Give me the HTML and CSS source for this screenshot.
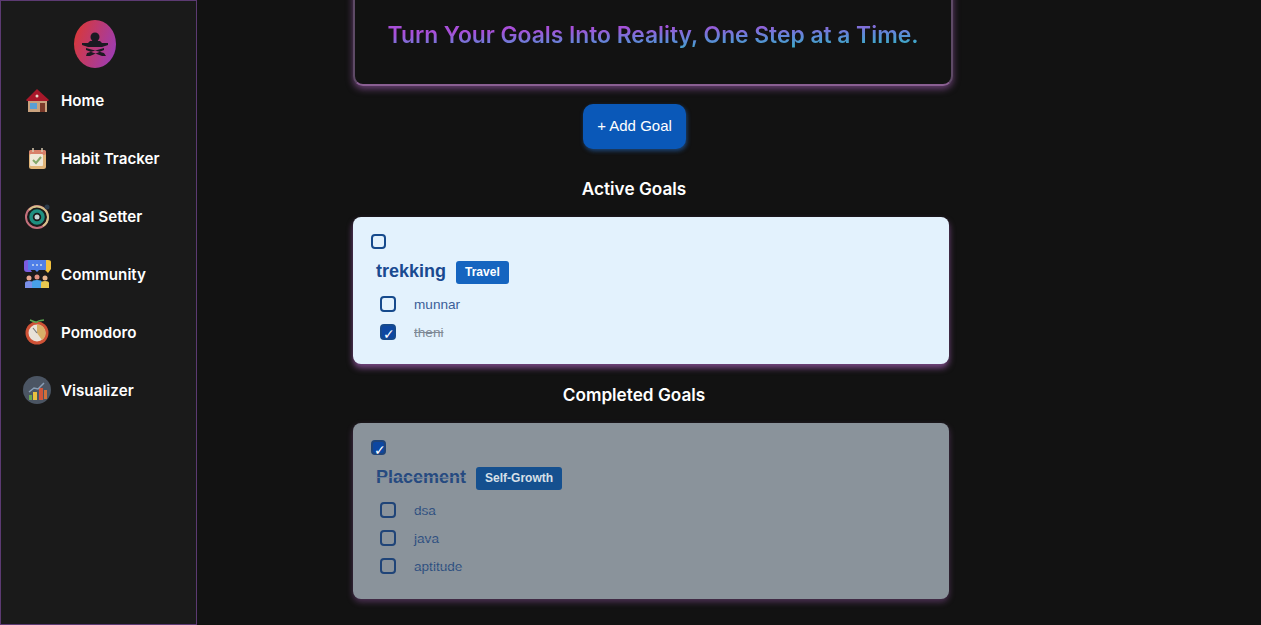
FILE: index.html
```html
<!DOCTYPE html>
<html lang="en">
<head>
<meta charset="utf-8">
<title>Goal Setter</title>
<link rel="stylesheet" href="styles.css">
</head>
<body>
<div class="app">
  <aside class="sidebar">
    <div class="logo">
      <svg viewBox="0 0 42 48" width="42" height="48">
        <defs><linearGradient id="lg" x1="0" y1="0.3" x2="1" y2="0.7"><stop offset="0" stop-color="#d8383a"/><stop offset="1" stop-color="#9c3cb4"/></linearGradient></defs>
        <ellipse cx="21" cy="24" rx="21" ry="24" fill="url(#lg)"/>
        <circle cx="21" cy="17" r="4.500" fill="#1c1a22"/>
        <path d="M16 21h10l2 2 6 0v2l-6 2H14L8 25v-2l6 0z" fill="#1c1a22"/>
        <path d="M12 28l18 5 2 3-4 0-16-6zM30 28l-17 5-1 3 4 0 14-6z" fill="#1c1a22"/>
      </svg>
    </div>
    <nav class="nav">
      <a class="nav-item"><span class="ic"><svg viewBox="0 0 28 28" width="28" height="28"><rect x="5" y="12" width="19" height="14" fill="#c9a27e"/><path d="M3 14L14 3l12 11-1 1H4z" fill="#a8182a"/><rect x="7" y="17" width="7" height="6" fill="#5a9fd6"/><rect x="17" y="17" width="5" height="9" fill="#7b3a2a"/><circle cx="14" cy="10" r="1.500" fill="#e8d8c8"/></svg></span><span>Home</span></a>
      <a class="nav-item"><span class="ic"><svg viewBox="0 0 28 28" width="28" height="28"><rect x="6" y="6" width="17" height="19" rx="2.500" fill="#e0b478"/><rect x="6" y="6" width="17" height="5" rx="2" fill="#d8806a"/><rect x="7" y="10" width="13" height="12" rx="1" fill="#efe8d8"/><path d="M10 16l3 3 5-6" fill="none" stroke="#84a86a" stroke-width="2"/><path d="M10 4v4M19 4v4" stroke="#d9c9b0" stroke-width="1.500"/></svg></span><span>Habit Tracker</span></a>
      <a class="nav-item"><span class="ic"><svg viewBox="0 0 28 28" width="28" height="28"><circle cx="14" cy="15" r="11" fill="none" stroke="#c4707c" stroke-width="2"/><path d="M6 8a11 11 0 0 1 19 7 11 11 0 0 1-5 9" fill="none" stroke="#d6c28a" stroke-width="2"/><circle cx="14" cy="15" r="6" fill="none" stroke="#1f8f80" stroke-width="3.500"/><circle cx="14" cy="15" r="2.500" fill="#c8d4d4"/><circle cx="24" cy="5" r="2.500" fill="#2c3c4c"/></svg></span><span>Goal Setter</span></a>
      <a class="nav-item"><span class="ic"><svg viewBox="0 0 28 28" width="28" height="28"><path d="M1 2q0-2 3-2h3v9l2 3H4q-3 0-3-3z" fill="#7a5ce0"/><path d="M21 0h4q3 0 3 2v7l-3 4-3-3z" fill="#f0c040"/><path d="M5 0h18v10h-7l-2 2-2-2H5z" fill="#4f7fe8"/><circle cx="10" cy="5" r="1" fill="#cde"/><circle cx="14" cy="5" r="1" fill="#cde"/><circle cx="18" cy="5" r="1" fill="#cde"/><circle cx="6" cy="18" r="2.500" fill="#e8a890"/><circle cx="14" cy="17" r="2.500" fill="#e09080"/><circle cx="22" cy="18" r="2.500" fill="#e8b890"/><path d="M2 28v-5q0-2 4-2t4 2v5z" fill="#7a8fe8"/><path d="M9 28v-6q0-2 5-2t5 2v6z" fill="#48a0e8"/><path d="M18 28v-5q0-2 4-2t4 2v5z" fill="#e8c850"/></svg></span><span>Community</span></a>
      <a class="nav-item"><span class="ic"><svg viewBox="0 0 28 28" width="28" height="28"><circle cx="14" cy="15" r="11.500" fill="#cf5236"/><circle cx="14" cy="15" r="8.500" fill="#e8e2d8"/><path d="M14 15V6.500a8.500 8.500 0 0 1 5 15.400z" fill="#d8b068"/><path d="M14 15L10 10" stroke="#777" stroke-width="1.200"/><path d="M7 2q7 3 7 2t7-2" fill="none" stroke="#5aa84f" stroke-width="1.500"/></svg></span><span>Pomodoro</span></a>
      <a class="nav-item"><span class="ic"><svg viewBox="0 0 28 28" width="28" height="28"><circle cx="14" cy="14" r="14" fill="#4b5563"/><rect x="10" y="16" width="4" height="8" fill="#e8c040"/><rect x="16" y="12" width="4" height="12" fill="#d2553a"/><rect x="21" y="14" width="3" height="9" fill="#d2703a"/><rect x="6" y="19" width="3" height="5" fill="#6aa84f"/><path d="M6 16l5-4 4 1 6-6" fill="none" stroke="#8aa0b8" stroke-width="1.500"/></svg></span><span>Visualizer</span></a>
    </nav>
  </aside>
  <main class="main">
    <section class="hero"><p class="tagline">Turn Your Goals Into Reality, One Step at a Time.</p></section>
    <button class="add-btn">+ Add Goal</button>
    <h2 class="section-title">Active Goals</h2>
    <article class="goal-card">
      <input class="goal-check" type="checkbox">
      <div class="goal-head"><h3 class="goal-name">trekking</h3><span class="badge">Travel</span></div>
      <ul class="tasks">
        <li class="task"><input type="checkbox"><span>munnar</span></li>
        <li class="task done"><input type="checkbox" checked><span>theni</span></li>
      </ul>
    </article>
    <h2 class="section-title completed-title">Completed Goals</h2>
    <article class="goal-card completed">
      <input class="goal-check" type="checkbox" checked>
      <div class="goal-head"><h3 class="goal-name">Placement</h3><span class="badge">Self-Growth</span></div>
      <ul class="tasks">
        <li class="task"><input type="checkbox"><span>dsa</span></li>
        <li class="task"><input type="checkbox"><span>java</span></li>
        <li class="task"><input type="checkbox"><span>aptitude</span></li>
      </ul>
    </article>
  </main>
</div>
</body>
</html>
```
FILE: styles.css
```css
* { box-sizing: border-box; }
html, body { margin: 0; height: 100%; overflow: hidden; }
body { background: #121212; color: #fff; font-family: "Inter", "Liberation Sans", sans-serif; }
.app { display: flex; height: 625px; }
.sidebar { width: 197px; flex: none; height: 625px; background: #1a1a1a; border: 1px solid #5c3a72; padding-top: 19px; }
.logo { display: flex; justify-content: center; height: 48px; margin-left: -7px; }
.nav { display: flex; flex-direction: column; gap: 30px; margin-top: 18px; padding-left: 22px; }
.nav-item { display: flex; align-items: center; gap: 10px; height: 28px; font-size: 15.2px; font-weight: 600; color: #fff; }
.ic { width: 28px; height: 28px; display: block; }
.main { flex: none; width: 596px; margin-left: 156px; display: flex; flex-direction: column; }
.hero { width: 600px; height: 106px; margin-top: -20px; flex: none; background: #121212; border: 2px solid #5e4a66; border-bottom-color: #8a5f92; border-radius: 10px; box-shadow: 0 3px 7px rgba(190,110,210,.5); display: flex; align-items: center; justify-content: center; padding-top: 2px; }
.tagline { margin: 0; font-size: 22.8px; font-weight: 600; background: linear-gradient(178deg, #a84fd8 30%, #5f88d8 65%, #2fb8c0 100%); -webkit-background-clip: text; background-clip: text; color: transparent; }
.add-btn { margin: 18px 0 0 230px; width: 103px; height: 45px; flex: none; padding: 0 0 2px; background: #0a58b8; color: #fff; border: 0; border-radius: 10px; font: 15px "Liberation Sans", sans-serif; box-shadow: 1px 2px 4px rgba(40,120,220,.5); }
.section-title { margin: 30px 34px 0 0; height: 20px; line-height: 20px; font-size: 17.2px; font-weight: 600; color: #fff; text-align: center; }
.completed-title { margin-top: 21px; }
.goal-card { width: 100%; margin-top: 18px; padding: 17px 18px 0; background: #e3f2fd; border-radius: 8px; box-shadow: 0 4px 6px rgba(190,110,210,.6); height: 147px; flex: none; font-family: "Liberation Sans", sans-serif; color: #1a4a90; }
.goal-card input { appearance: none; display: block; margin: 0; width: 15px; height: 15px; border: 2px solid #164a8c; border-radius: 4px; background: transparent; position: relative; flex: none; }
.goal-card input:checked { background: #0d47a1; }
.goal-card input:checked::after { content: "✓"; position: absolute; left: 1px; top: 2px; font: 700 14px/13px "DejaVu Sans", sans-serif; color: #fff; }
.goal-head { display: flex; align-items: center; gap: 10px; margin: 11px 0 0 5px; height: 25px; }
.goal-name { margin: 0 0 3px; font-size: 18px; font-weight: 700; color: #1a4a90; }
.badge { background: #1565c0; color: #fff; font-size: 12px; font-weight: 700; padding: 0 9px; height: 23px; line-height: 23px; border-radius: 3px; }
.tasks { list-style: none; margin: 5px 0 0; padding: 0 0 0 9px; }
.task { display: flex; align-items: center; gap: 18px; height: 28px; font-size: 13.6px; color: #3c5f98; }
.task input { width: 16px; height: 16px; }
.task.done span { color: #7f8a96; text-decoration: line-through; }
.completed { background: #8a939b; height: 176px; color: #1a4a90; box-shadow: 0 3px 6px rgba(190,110,210,.35); }
.completed .badge { background: #15508f; color: #d8e0e8; }
.completed .goal-name { color: #264a80; text-decoration: line-through; text-decoration-color: rgba(120,135,155,.8); text-decoration-thickness: 1px; }
.completed .task { color: #2f5080; text-decoration: line-through; text-decoration-color: rgba(120,135,155,.6); text-decoration-thickness: 1px; }
.completed input { border-color: #1f4478; }
```
